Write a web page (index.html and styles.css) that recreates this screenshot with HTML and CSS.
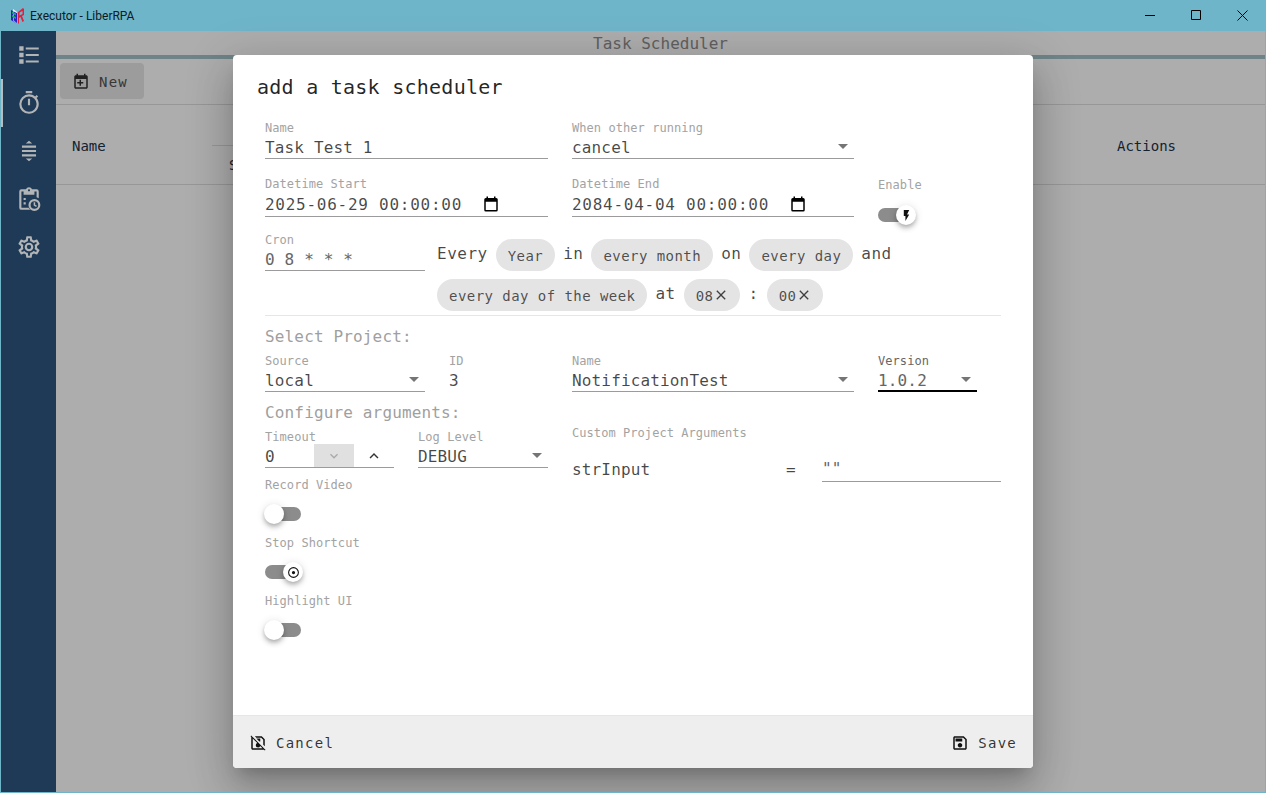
FILE: index.html
```html
<!DOCTYPE html>
<html lang="en">
<head>
<meta charset="utf-8">
<title>Executor - LiberRPA</title>
<link rel="stylesheet" href="styles.css">
</head>
<body>
<div class="window">
  <header class="titlebar">
    <svg class="logo" viewBox="0 0 13 16"><path fill="#2a22c8" d="M0 2l2 1v10l4 3v-1L3 12.500V3.500L6 5v11L0 12z"/><path fill="#18a868" d="M1 3.500l4 2v2l-4-2zM1 7l4 2v2L1 9z"/><path fill="#f2f2f2" d="M2 1l4 3v1L2 3z"/><path fill="#e0203c" d="M7 4l5-4 1 1v6l-2 1 2 5-1.500 1-2-5L8 10v5l-1 1zM8.500 4.500v3l3-1.500V3z"/></svg>
    <span class="apptitle">Executor - LiberRPA</span>
    <div class="winbtns">
      <span class="winbtn"><svg viewBox="0 0 11 11"><path d="M0 5.500h10" stroke="#000" fill="none"/></svg></span>
      <span class="winbtn"><svg viewBox="0 0 11 11"><path d="M.5.500h9v9h-9z" stroke="#000" fill="none"/></svg></span>
      <span class="winbtn"><svg viewBox="0 0 11 11"><path d="M.5.500l10 10M10.500.500l-10 10" stroke="#000" fill="none"/></svg></span>
    </div>
  </header>
  <div class="app">
    <nav class="sidebar">
      <span class="navitem"><svg class="navicon" viewBox="0 0 24 24"><path d="M3,4H7V8H3V4M9,5V7H21V5H9M3,10H7V14H3V10M9,11V13H21V11H9M3,16H7V20H3V16M9,17V19H21V17H9"/></svg></span>
      <span class="navitem navactive"><svg class="navicon" viewBox="0 0 24 24"><path d="M12,20A7,7 0 0,1 5,13A7,7 0 0,1 12,6A7,7 0 0,1 19,13A7,7 0 0,1 12,20M19.03,7.39L20.45,5.97C20,5.46 19.55,5 19.04,4.56L17.62,6C16.07,4.74 14.12,4 12,4A9,9 0 0,0 3,13A9,9 0 0,0 12,22C17,22 21,17.97 21,13C21,10.88 20.26,8.93 19.03,7.39M11,14H13V8H11M15,1H9V3H15V1Z"/></svg></span>
      <span class="navitem"><svg class="navicon" viewBox="0 0 24 24"><path d="M12 2.500l3 2.500H9zM12 21.500L9 19h6zM5.500 7h13v2h-13zM5.500 11h13v2h-13zM5.500 15h13v2h-13z"/></svg></span>
      <span class="navitem"><svg class="navicon" viewBox="0 0 24 24"><path d="M5 5v15h6.600c.4.700 1 1.400 1.600 2H5a2 2 0 0 1-2-2V5a2 2 0 0 1 2-2h4.200a3 3 0 0 1 5.600 0H19a2 2 0 0 1 2 2v6.300a8 8 0 0 0-2-1V5h-2v3H7V5zM12 3a1 1 0 1 0 0 2 1 1 0 0 0 0-2zM7 11h2v2H7zM7 15h2v2H7zM17 12a5.500 5.500 0 1 1 0 11 5.500 5.500 0 0 1 0-11zm0 2a3.500 3.500 0 1 0 0 7 3.500 3.500 0 0 0 0-7zm-.7 1h1.400v2.300l1.600 1-.7 1.100-2.300-1.400z"/></svg></span>
      <span class="navitem"><svg class="navicon" viewBox="0 0 24 24"><path d="M12,8A4,4 0 0,1 16,12A4,4 0 0,1 12,16A4,4 0 0,1 8,12A4,4 0 0,1 12,8M12,10A2,2 0 0,0 10,12A2,2 0 0,0 12,14A2,2 0 0,0 14,12A2,2 0 0,0 12,10M10,22C9.75,22 9.54,21.82 9.5,21.58L9.13,18.93C8.5,18.68 7.96,18.34 7.44,17.94L4.95,18.95C4.73,19.03 4.46,18.95 4.34,18.73L2.34,15.27C2.21,15.05 2.27,14.78 2.46,14.63L4.57,12.97L4.5,12L4.57,11L2.46,9.37C2.27,9.22 2.21,8.95 2.34,8.73L4.34,5.27C4.46,5.05 4.73,4.96 4.95,5.05L7.44,6.05C7.96,5.66 8.5,5.32 9.13,5.07L9.5,2.42C9.54,2.18 9.75,2 10,2H14C14.25,2 14.46,2.18 14.5,2.42L14.87,5.07C15.5,5.32 16.04,5.66 16.56,6.05L19.05,5.05C19.27,4.96 19.54,5.05 19.66,5.27L21.66,8.73C21.79,8.95 21.73,9.22 21.54,9.37L19.43,11L19.5,12L19.43,13L21.54,14.63C21.73,14.78 21.79,15.05 21.66,15.27L19.66,18.73C19.54,18.95 19.27,19.04 19.05,18.95L16.56,17.95C16.04,18.34 15.5,18.68 14.87,18.93L14.5,21.58C14.46,21.82 14.25,22 14,22H10M11.25,4L10.88,6.61C9.68,6.86 8.62,7.5 7.85,8.39L5.44,7.35L4.69,8.65L6.8,10.2C6.4,11.37 6.4,12.64 6.8,13.8L4.68,15.36L5.43,16.66L7.86,15.62C8.63,16.5 9.68,17.14 10.87,17.38L11.24,20H12.76L13.13,17.39C14.32,17.14 15.37,16.5 16.14,15.62L18.57,16.66L19.32,15.36L17.2,13.81C17.6,12.64 17.6,11.37 17.2,10.2L19.31,8.65L18.56,7.35L16.15,8.39C15.38,7.5 14.32,6.86 13.12,6.62L12.75,4H11.25Z"/></svg></span>
    </nav>
    <main class="content">
      <div class="pagetitle">Task Scheduler</div>
      <div class="pagebar"></div>
      <div class="toolbar">
        <span class="newbtn"><svg class="btnicon" viewBox="0 0 24 24"><path d="M12 12H15V14H12V17H10V14H7V12H10V9H12V12M19 3H18V1H16V3H8V1H6V3H5C3.9 3 3 3.9 3 5V19C3 20.1 3.9 21 5 21H19C20.1 21 21 20.1 21 19V5C21 3.9 20.1 3 19 3M19 19H5V8H19V19Z"/></svg>New</span>
      </div>
      <div class="tablehead">
        <span class="thname">Name</span>
        <span class="thsub"><span class="thsubtext">S</span></span>
        <span class="thactions">Actions</span>
      </div>
    </main>
  </div>
  <div class="scrim"></div>
  <section class="dialog">
    <h2 class="dtitle">add a task scheduler</h2>
    <div class="dbody">
      <div class="row row1">
        <div class="field w283"><label class="flabel">Name</label><div class="fvalue">Task Test 1</div></div>
        <div class="field w282"><label class="flabel">When other running</label><div class="fvalue">cancel<i class="caret"></i></div></div>
      </div>
      <div class="row row2">
        <div class="field w283"><label class="flabel">Datetime Start</label><div class="fvalue tall">2025-06-29 00:00:00<svg class="calicon" viewBox="0 0 24 24"><path d="M19 4h-1V2h-2v2H8V2H6v2H5a2 2 0 0 0-2 2v14a2 2 0 0 0 2 2h14a2 2 0 0 0 2-2V6a2 2 0 0 0-2-2zm0 16H5V9h14z"/></svg></div></div>
        <div class="field w282"><label class="flabel">Datetime End</label><div class="fvalue tall">2084-04-04 00:00:00<svg class="calicon" viewBox="0 0 24 24"><path d="M19 4h-1V2h-2v2H8V2H6v2H5a2 2 0 0 0-2 2v14a2 2 0 0 0 2 2h14a2 2 0 0 0 2-2V6a2 2 0 0 0-2-2zm0 16H5V9h14z"/></svg></div></div>
        <div class="field switchfield enable"><label class="flabel">Enable</label>
          <span class="switch on"><i class="thumb"><svg viewBox="0 0 24 24"><path d="M7,2V13H10V22L17,10H13L17,2H7Z"/></svg></i></span></div>
      </div>
      <div class="row row3">
        <div class="field w160"><label class="flabel">Cron</label><div class="fvalue cronval">0 8 * * *</div></div>
        <div class="cron">
          <span class="crontext">Every</span><span class="chip">Year</span><span class="crontext">in</span><span class="chip">every month</span><span class="crontext">on</span><span class="chip">every day</span><span class="crontext">and</span>
          <span class="chip">every day of the week</span><span class="crontext">at</span><span class="chip chipx">08<svg viewBox="0 0 24 24"><path d="M19 6.41L17.59 5 12 10.59 6.41 5 5 6.41 10.59 12 5 17.59 6.41 19 12 13.41 17.59 19 19 17.59 13.41 12z"/></svg></span><span class="crontext">:</span><span class="chip chipx">00<svg viewBox="0 0 24 24"><path d="M19 6.41L17.59 5 12 10.59 6.41 5 5 6.41 10.59 12 5 17.59 6.41 19 12 13.41 17.59 19 19 17.59 13.41 12z"/></svg></span>
        </div>
      </div>
      <hr class="divider">
      <div class="section">Select Project:</div>
      <div class="row row4">
        <div class="field w160"><label class="flabel">Source</label><div class="fvalue">local<i class="caret"></i></div></div>
        <div class="field w123"><label class="flabel">ID</label><div class="fvalue noline">3</div></div>
        <div class="field w282"><label class="flabel">Name</label><div class="fvalue">NotificationTest<i class="caret"></i></div></div>
        <div class="field w99 focused"><label class="flabel">Version</label><div class="fvalue">1.0.2<i class="caret"></i></div></div>
      </div>
      <div class="section section2">Configure arguments:</div>
      <div class="row row5">
        <div class="col-left">
          <div class="row subrow">
            <div class="field w129"><label class="flabel">Timeout</label>
              <div class="fvalue stepper">0<span class="stepdown"><svg viewBox="0 0 24 24"><path d="M7.41 8.59L12 13.17l4.59-4.58L18 10l-6 6-6-6z"/></svg></span><span class="stepup"><svg viewBox="0 0 24 24"><path d="M7.41 15.41L12 10.83l4.59 4.58L18 14l-6-6-6 6z"/></svg></span></div></div>
            <div class="field w130"><label class="flabel">Log Level</label><div class="fvalue">DEBUG<i class="caret"></i></div></div>
          </div>
          <div class="switchrow"><label class="flabel">Record Video</label><span class="switch"><i class="thumb"></i></span></div>
          <div class="switchrow"><label class="flabel">Stop Shortcut</label><span class="switch on"><i class="thumb"><svg viewBox="0 0 24 24"><path d="M12 2a10 10 0 1 0 0 20 10 10 0 0 0 0-20zm0 18a8 8 0 1 1 0-16 8 8 0 0 1 0 16zm0-11a3 3 0 1 0 0 6 3 3 0 0 0 0-6z"/></svg></i></span></div>
          <div class="switchrow"><label class="flabel">Highlight UI</label><span class="switch"><i class="thumb"></i></span></div>
        </div>
        <div class="col-right">
          <label class="flabel customlabel">Custom Project Arguments</label>
          <div class="argrow">
            <span class="argname">strInput</span>
            <span class="argeq">=</span>
            <div class="fvalue argval">""</div>
          </div>
        </div>
      </div>
    </div>
    <footer class="dfooter">
      <span class="dbtn"><svg class="btnicon small" viewBox="0 0 24 24"><path d="M3 2L2 3l1 1v15c0 1.100.9 2 2 2h15l1 1 1-1-1.500-1.500L3.500 2.500zM5 19V6l6.100 6.100A3 3 0 0 0 9 15a3 3 0 0 0 3 3 3 3 0 0 0 2.900-2.100L18 19zM17 3H7.800l2 2h6.400L19 7.800v6.400l2 2V7zM15 6v4h-1.200l-4-4z"/></svg>Cancel</span>
      <span class="dbtn"><svg class="btnicon small" viewBox="0 0 24 24"><path d="M17 3H5C3.89 3 3 3.9 3 5V19C3 20.1 3.89 21 5 21H19C20.1 21 21 20.1 21 19V7L17 3M19 19H5V5H16.17L19 7.83V19M12 12C10.34 12 9 13.34 9 15S10.34 18 12 18 15 16.66 15 15 13.66 12 12 12M6 6H15V10H6V6Z"/></svg>Save</span>
    </footer>
  </section>
</div>
</body>
</html>
```

FILE: styles.css
```css
* { box-sizing: border-box; }
html, body { margin: 0; padding: 0; height: 100%; overflow: hidden; }
body { font-family: "DejaVu Sans Mono", "Liberation Mono", monospace; color: #000; background: #fff; }

.window { position: relative; width: 1266px; height: 793px; border: 1px solid #6fb5c9; border-top: 0; overflow: hidden; display: flex; flex-direction: column; }
.titlebar { height: 31px; flex: none; background: #6fb5c9; display: flex; align-items: center; padding-left: 11px; margin-left: -1px; margin-right: -1px; }
.logo { width: 13px; height: 16px; margin-right: 6px; }
.apptitle { font-family: Roboto, "Liberation Sans", sans-serif; font-size: 12px; color: #0b1a24; }
.winbtns { margin-left: auto; margin-right: 1px; display: flex; }
.winbtn { width: 46px; height: 31px; display: flex; align-items: center; justify-content: center; }
.winbtn svg { width: 11px; height: 11px; }

.app { flex: 1; display: flex; min-height: 0; background: #fff; }
.sidebar { width: 55px; flex: none; background: #1e3a56; display: flex; flex-direction: column; }
.navitem { height: 48px; display: flex; align-items: center; justify-content: center; position: relative; }
.navactive::before { content: ""; position: absolute; left: 0; top: 0; bottom: 0; width: 2px; background: #b5bcc3; }
.navicon { width: 26px; height: 26px; fill: #b2b4b6; }

.content { flex: 1; display: flex; flex-direction: column; background: #fff; }
.pagetitle { height: 24px; text-align: center; font-size: 16px; line-height: 26px; color: #858585; }
.pagebar { height: 4px; background: #9bbec5; }
.toolbar { height: 46px; padding: 4px; border-bottom: 1px solid #dcdcdc; }
.newbtn { display: inline-flex; align-items: center; height: 36px; width: 84px; padding: 1px 0 0 12px; background: #e4e4e4; border-radius: 4px; font-size: 14px; letter-spacing: 1.25px; color: #444; }
.btnicon { width: 18px; height: 18px; margin-right: 9px; fill: #222; }
.tablehead { position: relative; height: 80px; border-bottom: 1px solid #dcdcdc; font-size: 14px; color: #0d2238; }
.thname { position: absolute; left: 16px; top: 33px; }
.thactions { position: absolute; left: 1061px; top: 33px; }
.thsub { position: absolute; left: 156px; top: 40px; width: 30px; border-top: 1px solid #dcdcdc; }
.thsubtext { position: absolute; left: 17px; top: 11px; color: #0d2238; }

.scrim { position: absolute; inset: 31px 0 0 55px; background: rgba(33, 33, 33, 0.37); }

.dialog { position: absolute; left: 232px; top: 55px; width: 800px; height: 713px; background: #fff; border-radius: 4px; display: flex; flex-direction: column; overflow: hidden; box-shadow: 0 11px 15px -7px rgba(0,0,0,.2), 0 24px 38px 3px rgba(0,0,0,.14), 0 9px 46px 8px rgba(0,0,0,.12); }
.dtitle { margin: 0; height: 66px; padding: 20px 24px 0; font-size: 20px; font-weight: 400; line-height: 24px; letter-spacing: .25px; color: rgba(0,0,0,.87); }
.dbody { flex: 1; padding: 0 32px; display: flex; flex-direction: column; min-height: 0; }
.dfooter { height: 53px; flex: none; background: #eee; border-top: 1px solid #e6e6e6; display: flex; align-items: center; justify-content: space-between; padding: 2px 16px 0; }
.dbtn { display: inline-flex; align-items: center; font-size: 14px; letter-spacing: 1.25px; color: rgba(0,0,0,.8); }
.btnicon.small { width: 18px; height: 18px; margin-right: 9px; fill: #111; }

.row { display: flex; gap: 24px; align-items: flex-start; }
.field { flex: none; }
.w283 { width: 283px; }
.w282 { width: 282px; }
.w160 { width: 160px; }
.w123 { width: 99px; }
.w99 { width: 99px; }
.w129 { width: 129px; }
.w130 { width: 130px; }

.flabel { display: block; font-size: 12px; line-height: 14px; height: 14px; color: #a3a3a3; letter-spacing: .06px; }
.fvalue { position: relative; display: flex; align-items: center; height: 24px; padding-top: 2px; font-size: 16px; line-height: 22px; letter-spacing: .15px; color: rgba(0,0,0,.72); border-bottom: 1px solid #9b9b9b; }
.fvalue.noline { border-bottom: 0; }
.fvalue.tall { height: 26px; letter-spacing: .74px; }
.row1 { height: 56px; }
.row2 { height: 56px; }
.row3 { height: 82px; gap: 12px; }
.caret { position: absolute; right: 6px; top: 9px; width: 0; height: 0; border-left: 5px solid transparent; border-right: 5px solid transparent; border-top: 5px solid #757575; }
.calicon { position: absolute; left: 217px; top: 4px; width: 18px; height: 18px; fill: #000; }
.cronval { color: #666; }
.focused .flabel { color: #666; }
.focused .fvalue { border-bottom: 2px solid #000; padding-top: 3px; color: #666; }
.enable .flabel { margin-top: 1px; }
.enable .switch { margin-top: 16px; }

.cron { flex: 1; display: flex; flex-wrap: wrap; gap: 8px 0; margin-top: 6px; font-size: 16px; }
.crontext { height: 32px; line-height: 30px; letter-spacing: .5px; color: rgba(0,0,0,.72); margin-right: 8px; }
.chip { height: 32px; line-height: 34px; padding: 2px 12px 0; background: #e4e4e4; border-radius: 16px; font-size: 14px; color: rgba(0,0,0,.68); margin-right: 8px; letter-spacing: .45px; display: inline-flex; align-items: center; }
.chip svg { width: 16px; height: 16px; fill: rgba(0,0,0,.72); margin-right: -1px; margin-top: -2px; }

.divider { margin: 0; height: 1px; border: 0; background: #e6e6e6; }
.section { font-size: 16px; line-height: 24px; padding-top: 9px; color: #9f9f9f; letter-spacing: .15px; box-sizing: content-box; height: 24px; }
.row4 { height: 54px; margin-top: 5px; }
.section2 { margin-top: -7px; padding-top: 0; }
.row5 { margin-top: 5px; }
.col-left { width: 283px; flex: none; }
.subrow { height: 46px; gap: 24px; }
.stepper { padding-right: 0; }
.stepdown { position: absolute; left: 49px; top: 0; width: 40px; height: 23px; background: #e0e0e0; display: flex; align-items: center; justify-content: center; }
.stepdown svg { width: 16px; height: 16px; fill: #aaa; }
.stepup { position: absolute; left: 89px; top: 0; width: 40px; height: 23px; display: flex; align-items: center; justify-content: center; }
.stepup svg { width: 18px; height: 18px; fill: #333; }

.switchrow { height: 58px; padding-top: 2px; }
.switch { position: relative; display: block; width: 36px; height: 14px; margin-top: 15px; border-radius: 7px; background: #8c8c8c; }
.switch .thumb { position: absolute; left: -1px; top: -3px; width: 20px; height: 20px; border-radius: 50%; background: #fff; box-shadow: 0 2px 4px -1px rgba(0,0,0,.2), 0 4px 5px rgba(0,0,0,.14), 0 1px 10px rgba(0,0,0,.12); display: flex; align-items: center; justify-content: center; }
.switch.on { width: 28px; }
.switch.on .thumb { left: 18px; }
.thumb svg { width: 13px; height: 13px; fill: #111; }

.col-right { flex: 1; }
.customlabel { margin-top: -4px; }
.argrow { display: flex; align-items: center; margin-top: 17px; height: 24px; font-size: 16px; color: rgba(0,0,0,.72); letter-spacing: .15px; }
.argname { width: 214px; }
.argeq { width: 36px; }
.argval { width: 179px; height: 24px; margin-top: 2px; padding: 0 0 2px; color: #666; }
```
